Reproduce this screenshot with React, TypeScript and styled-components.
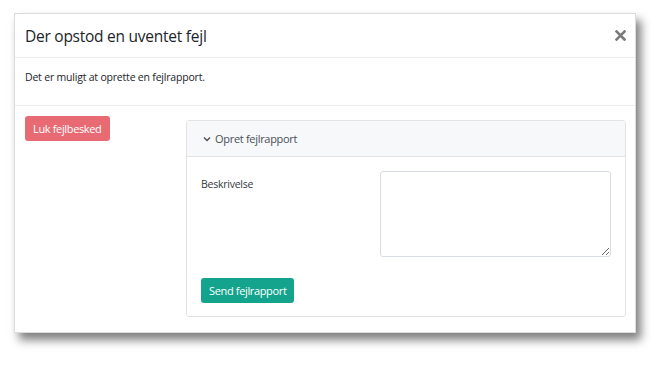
import styled, { createGlobalStyle } from "styled-components";

const GlobalStyle = createGlobalStyle`
  html, body {
    margin: 0;
    padding: 0;
    background: #ffffff;
  }
  body {
    font-family: "Open Sans", "Noto Sans", sans-serif;
    color: #212529;
  }
`;

const Page = styled.div`
  width: 671px;
  height: 371px;
  padding: 13px 0 0 14px;
  box-sizing: border-box;
`;

const Dialog = styled.div`
  width: 622px;
  height: 320px;
  background: #ffffff;
  border: 1px solid #dcdcdc;
  box-sizing: border-box;
  box-shadow: 5px 7px 9px rgba(0, 0, 0, 0.5);
  display: flex;
  flex-direction: column;
`;

const Header = styled.div`
  height: 43px;
  flex-shrink: 0;
  display: flex;
  align-items: center;
  justify-content: space-between;
  padding: 0 8px 0 10px;
  border-bottom: 1px solid #ececec;
`;

const Title = styled.h1`
  margin: 0;
  font-size: 15.5px;
  font-weight: 400;
  letter-spacing: -0.25px;
  color: #212529;
`;

const CloseButton = styled.button`
  border: none;
  background: none;
  padding: 0;
  width: 14px;
  height: 14px;
  display: flex;
  align-items: center;
  justify-content: center;
  cursor: pointer;
`;

const Message = styled.div`
  height: 48px;
  flex-shrink: 0;
  box-sizing: border-box;
  padding: 12px 10px 0 10px;
  font-size: 10.5px;
  letter-spacing: -0.2px;
  color: #212529;
  border-bottom: 1px solid #ececec;
`;

const Footer = styled.div`
  flex: 1;
  display: flex;
  justify-content: space-between;
  align-items: flex-start;
  padding: 10px 9px 0 10px;
`;

const Button = styled.button<{ $tone: "danger" | "success" }>`
  border: none;
  border-radius: 3px;
  height: 25px;
  padding: 0 8px;
  font-family: inherit;
  font-size: 11px;
  letter-spacing: -0.35px;
  color: #ffffff;
  background: ${(p) => (p.$tone === "danger" ? "#e86a73" : "#14a38d")};
  cursor: pointer;
`;

const Card = styled.div`
  margin-top: 4px;
  width: 440px;
  height: 197px;
  box-sizing: border-box;
  border: 1px solid #e3e3e3;
  border-radius: 3px;
  display: flex;
  flex-direction: column;
`;

const CardHeader = styled.div`
  height: 35px;
  flex-shrink: 0;
  display: flex;
  align-items: center;
  gap: 4px;
  padding: 0 16px;
  background: #f7f8fa;
  border-bottom: 1px solid #e3e3e3;
  font-size: 11px;
  letter-spacing: -0.3px;
  color: #495057;
`;

const CardBody = styled.div`
  padding: 14px 14px 0 14px;
  display: flex;
  flex-direction: column;
  gap: 21px;
`;

const FieldRow = styled.div`
  display: flex;
  justify-content: space-between;
`;

const Label = styled.label`
  font-size: 10.5px;
  letter-spacing: -0.25px;
  color: #343a40;
  padding-top: 6px;
`;

const TextArea = styled.textarea`
  width: 231px;
  height: 86px;
  box-sizing: border-box;
  border: 1px solid #d8dde3;
  border-radius: 3px;
  resize: vertical;
  font-family: inherit;
  margin: 0;
`;

const ActionRow = styled.div`
  display: flex;
`;

export default function App() {
  return (
    <>
      <GlobalStyle />
      <Page>
        <Dialog>
          <Header>
            <Title>Der opstod en uventet fejl</Title>
            <CloseButton aria-label="Luk">
              <svg width="11" height="11" viewBox="0 0 11 11">
                <path
                  d="M1.5 1.5 L9.5 9.5 M9.5 1.5 L1.5 9.5"
                  stroke="#7b7b7b"
                  strokeWidth="2.6"
                  strokeLinecap="square"
                />
              </svg>
            </CloseButton>
          </Header>
          <Message>Det er muligt at oprette en fejlrapport.</Message>
          <Footer>
            <Button $tone="danger">Luk fejlbesked</Button>
            <Card>
              <CardHeader>
                <svg width="8" height="6" viewBox="0 0 8 6">
                  <path
                    d="M1 1.5 L4 4.5 L7 1.5"
                    fill="none"
                    stroke="#495057"
                    strokeWidth="1.4"
                  />
                </svg>
                Opret fejlrapport
              </CardHeader>
              <CardBody>
                <FieldRow>
                  <Label>Beskrivelse</Label>
                  <TextArea />
                </FieldRow>
                <ActionRow>
                  <Button $tone="success">Send fejlrapport</Button>
                </ActionRow>
              </CardBody>
            </Card>
          </Footer>
        </Dialog>
      </Page>
    </>
  );
}
